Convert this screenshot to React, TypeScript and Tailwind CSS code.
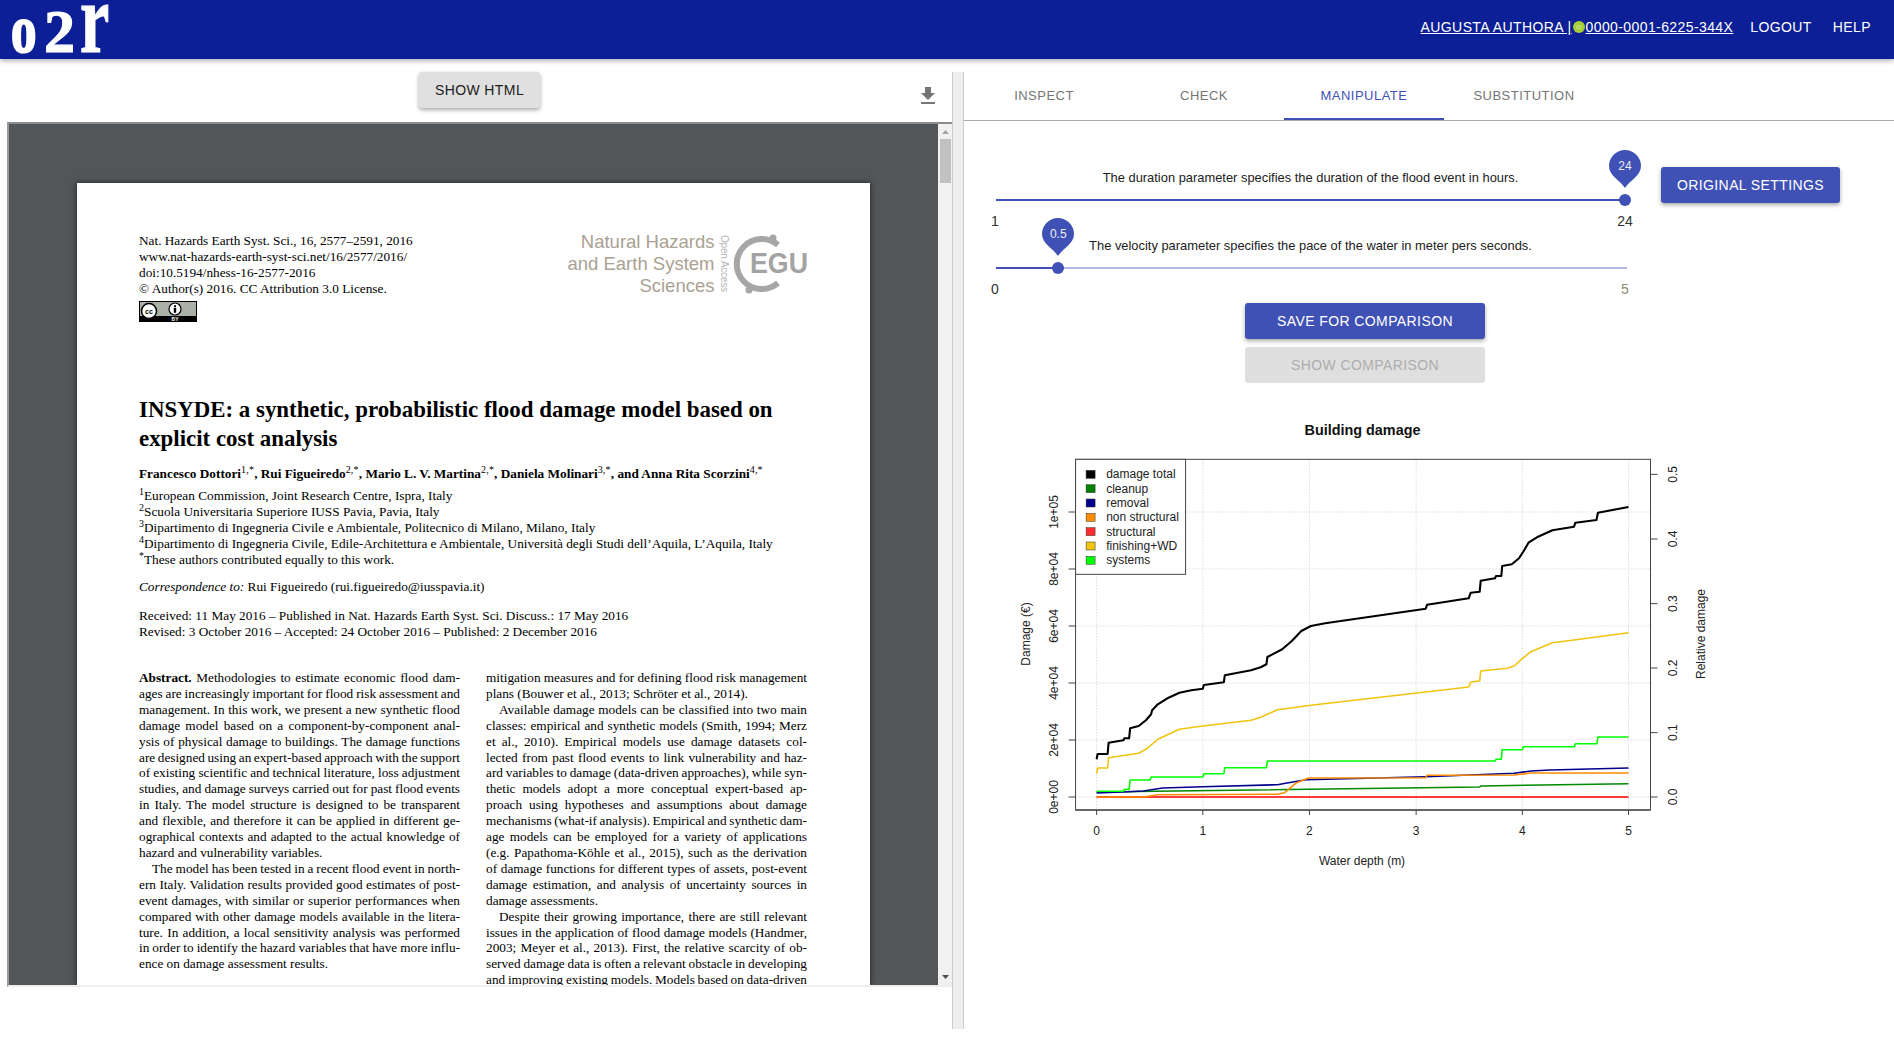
import React from "react";

const leftCol: (string | { t: string; last?: boolean; indent?: boolean; abs?: boolean })[] = [
  { t: " Methodologies to estimate economic flood dam-", abs: true },
  "ages are increasingly important for flood risk assessment and",
  "management. In this work, we present a new synthetic flood",
  "damage model based on a component-by-component anal-",
  "ysis of physical damage to buildings. The damage functions",
  "are designed using an expert-based approach with the support",
  "of existing scientific and technical literature, loss adjustment",
  "studies, and damage surveys carried out for past flood events",
  "in Italy. The model structure is designed to be transparent",
  "and flexible, and therefore it can be applied in different ge-",
  "ographical contexts and adapted to the actual knowledge of",
  { t: "hazard and vulnerability variables.", last: true },
  { t: "The model has been tested in a recent flood event in north-", indent: true },
  "ern Italy. Validation results provided good estimates of post-",
  "event damages, with similar or superior performances when",
  "compared with other damage models available in the litera-",
  "ture. In addition, a local sensitivity analysis was performed",
  "in order to identify the hazard variables that have more influ-",
  { t: "ence on damage assessment results.", last: true },
];

const rightCol: (string | { t: string; last?: boolean; indent?: boolean })[] = [
  "mitigation measures and for defining flood risk management",
  { t: "plans (Bouwer et al., 2013; Schröter et al., 2014).", last: true },
  { t: "Available damage models can be classified into two main", indent: true },
  "classes: empirical and synthetic models (Smith, 1994; Merz",
  "et al., 2010). Empirical models use damage datasets col-",
  "lected from past flood events to link vulnerability and haz-",
  "ard variables to damage (data-driven approaches), while syn-",
  "thetic models adopt a more conceptual expert-based ap-",
  "proach using hypotheses and assumptions about damage",
  "mechanisms (what-if analysis). Empirical and synthetic dam-",
  "age models can be employed for a variety of applications",
  "(e.g. Papathoma-Köhle et al., 2015), such as the derivation",
  "of damage functions for different types of assets, post-event",
  "damage estimation, and analysis of uncertainty sources in",
  { t: "damage assessments.", last: true },
  { t: "Despite their growing importance, there are still relevant", indent: true },
  "issues in the application of flood damage models (Handmer,",
  "2003; Meyer et al., 2013). First, the relative scarcity of ob-",
  "served damage data is often a relevant obstacle in developing",
  "and improving existing models. Models based on data-driven",
];

function Column({ lines }: { lines: typeof leftCol }) {
  return (
    <div className="w-[321px]">
      {lines.map((l, i) => {
        const o = typeof l === "string" ? { t: l } : l;
        const item = o as { t: string; last?: boolean; indent?: boolean; abs?: boolean };
        return (
          <div
            key={i}
            className={
              "h-[15.92px] whitespace-nowrap " +
              (item.last ? "" : "[text-align:justify] [text-align-last:justify] [word-spacing:-1.6px] ") +
              (item.indent ? "pl-[13px]" : "")
            }
          >
            {item.abs && <b>Abstract.</b>}
            {item.t}
          </div>
        );
      })}
    </div>
  );
}

function EguLogo() {
  return (
    <svg width="250" height="66" viewBox="0 0 250 66" className="-mt-[1px] -mr-[1px] shrink-0">
      <g fontFamily="'Liberation Sans',sans-serif" fontSize="18.5" fill="#aaa193" textAnchor="end">
        <text x="155.5" y="15.5">Natural Hazards</text>
        <text x="155.5" y="38">and Earth System</text>
        <text x="155.5" y="60">Sciences</text>
      </g>
      <text
        transform="translate(162,3) rotate(90)"
        fontFamily="'Liberation Sans',sans-serif"
        fontSize="10"
        fill="#b5b5b5"
        textLength="57"
      >
        Open Access
      </text>
      <path d="M219 13 A25 25 0 1 0 219 51" fill="none" stroke="#a6a6a6" strokeWidth="6" />
      <circle cx="214" cy="6" r="3.5" fill="#a6a6a6" />
      <circle cx="190" cy="58" r="3.5" fill="#a6a6a6" />
      <text
        x="191"
        y="41"
        fontFamily="'Liberation Sans',sans-serif"
        fontWeight="700"
        fontSize="29"
        fill="#a3a3a3"
        textLength="58"
        lengthAdjust="spacingAndGlyphs"
      >
        EGU
      </text>
    </svg>
  );
}

function CcBadge() {
  return (
    <svg width="58" height="21" viewBox="0 0 58 21" className="mt-1 block">
      <rect width="58" height="21" fill="#000" />
      <rect x="1" y="1" width="56" height="14" fill="#aab0a6" />
      <circle cx="10" cy="10" r="7.5" fill="#fff" stroke="#000" strokeWidth="1.5" />
      <text x="10" y="12.5" textAnchor="middle" fontSize="7" fontWeight="700" fontFamily="'Liberation Sans',sans-serif">cc</text>
      <circle cx="36" cy="8" r="6" fill="#fff" stroke="#000" strokeWidth="1.2" />
      <circle cx="36" cy="5.2" r="1.1" fill="#000" />
      <rect x="34.8" y="6.8" width="2.4" height="5" fill="#000" />
      <text x="36" y="20" textAnchor="middle" fontSize="5" fill="#fff" fontWeight="700" fontFamily="'Liberation Sans',sans-serif">BY</text>
    </svg>
  );
}

function Pdf() {
  return (
    <div className="mx-auto h-[802px] w-[793px] overflow-hidden bg-white px-[62px] pt-[50px] text-[13.28px] leading-[16px] text-black shadow-[0_0_6px_rgba(0,0,0,0.6)] [font-family:'Liberation_Serif',serif]">
      <div className="flex items-start justify-between">
        <div>
          <div>Nat. Hazards Earth Syst. Sci., 16, 2577–2591, 2016</div>
          <div>www.nat-hazards-earth-syst-sci.net/16/2577/2016/</div>
          <div>doi:10.5194/nhess-16-2577-2016</div>
          <div>© Author(s) 2016. CC Attribution 3.0 License.</div>
          <CcBadge />
        </div>
        <EguLogo />
      </div>
      <h1 className="mt-[73px] text-[22.9px] font-bold leading-[29px]">
        INSYDE: a synthetic, probabilistic flood damage model based on
        <br />
        explicit cost analysis
      </h1>
      <div className="mt-[13px] font-bold whitespace-nowrap">
        Francesco Dottori<sup className="text-[10px] font-normal tracking-[0.2px]">1,*</sup>, Rui Figueiredo
        <sup className="text-[10px] font-normal tracking-[0.2px]">2,*</sup>, Mario L. V. Martina
        <sup className="text-[10px] font-normal tracking-[0.2px]">2,*</sup>, Daniela Molinari
        <sup className="text-[10px] font-normal tracking-[0.2px]">3,*</sup>, and Anna Rita Scorzini
        <sup className="text-[10px] font-normal tracking-[0.2px]">4,*</sup>
      </div>
      <div className="mt-[6px] whitespace-nowrap">
        <div><sup className="text-[10px]">1</sup>European Commission, Joint Research Centre, Ispra, Italy</div>
        <div><sup className="text-[10px]">2</sup>Scuola Universitaria Superiore IUSS Pavia, Pavia, Italy</div>
        <div><sup className="text-[10px]">3</sup>Dipartimento di Ingegneria Civile e Ambientale, Politecnico di Milano, Milano, Italy</div>
        <div><sup className="text-[10px]">4</sup>Dipartimento di Ingegneria Civile, Edile-Architettura e Ambientale, Università degli Studi dell’Aquila, L’Aquila, Italy</div>
        <div><sup className="text-[10px]">*</sup>These authors contributed equally to this work.</div>
      </div>
      <div className="mt-[11px]">
        <i>Correspondence to:</i> Rui Figueiredo (rui.figueiredo@iusspavia.it)
      </div>
      <div className="mt-[13px]">
        <div>Received: 11 May 2016 – Published in Nat. Hazards Earth Syst. Sci. Discuss.: 17 May 2016</div>
        <div>Revised: 3 October 2016 – Accepted: 24 October 2016 – Published: 2 December 2016</div>
      </div>
      <div className="mt-[30px] flex gap-[26px]">
        <Column lines={leftCol} />
        <Column lines={rightCol} />
      </div>
    </div>
  );
}

function Slider({
  text,
  min,
  max,
  value,
  pct,
  maxColor,
  trackClass,
}: {
  text: string;
  min: string;
  max: string;
  value: string;
  pct: number;
  maxColor: string;
  trackClass: string;
}) {
  return (
    <div className="h-[68px] w-[629px]">
      <div className="h-[16px] whitespace-nowrap text-center text-[12.9px] leading-[16px] text-[#212121]">
        {text}
      </div>
      <div className="relative flex h-[28px] items-center">
        <div className={"relative h-[2px] shrink-0 bg-[#b2b9e1] " + trackClass}>
          <div className="h-full bg-[#3f51b5]" style={{ width: `${pct}%` }} />
        </div>
        <div
          className="absolute top-[8px] h-[12px] w-[12px] -translate-x-1/2 rounded-full bg-[#3f51b5]"
          style={{ left: `${pct}%` }}
        />
        <div
          className="absolute top-[-36px] flex h-[38px] w-[32px] -translate-x-1/2 items-start justify-center"
          style={{ left: `${pct}%` }}
        >
          <svg width="32" height="38" viewBox="0 0 32 38" className="absolute inset-0">
            <path d="M16 38 C11 30 0 26 0 16 A16 16 0 0 1 32 16 C32 26 21 30 16 38Z" fill="#3f51b5" />
          </svg>
          <span className="relative mt-[9px] text-[12px] leading-[14px] text-white/90">{value}</span>
        </div>
      </div>
      <div className="-mx-[10px] flex justify-between text-[14px] leading-[14px]">
        <span className="-ml-px w-[20px] text-center text-[#333]">{min}</span>
        <span className="w-[20px] text-center" style={{ color: maxColor }}>{max}</span>
      </div>
    </div>
  );
}

const X = (z: number) => z / 2.0907 - 10;
const Y = (z: number) => z / 3 - 5;

const series: { c: string; w: number; p: number[] }[] = [
  { c: "#ff3b3b", w: 1.8, p: [202, 1068, 1314, 1068] },
  {
    c: "#008a00",
    w: 1.5,
    p: [202, 1053, 1003, 1038, 1005, 1035, 1314, 1028],
  },
  {
    c: "#00008b",
    w: 1.6,
    p: [202, 1056, 270, 1052, 300, 1050, 340, 1041, 424, 1037, 580, 1031, 600, 1026, 640, 1016, 890, 1007, 1075, 997, 1110, 990, 1150, 987, 1314, 981],
  },
  {
    c: "#ff8c00",
    w: 1.6,
    p: [202, 1068, 300, 1068, 330, 1061, 580, 1060, 595, 1055, 620, 1025, 645, 1011, 890, 1010, 893, 1003, 1075, 1002, 1110, 996, 1314, 996],
  },
  {
    c: "#00ff00",
    w: 1.6,
    p: [202, 1051, 258, 1051, 260, 1045, 270, 1045, 272, 1017, 314, 1017, 316, 1008, 424, 1008, 426, 998, 468, 998, 470, 980, 557, 980, 559, 960, 1035, 960, 1037, 955, 1048, 955, 1050, 926, 1092, 926, 1094, 917, 1201, 917, 1203, 908, 1248, 908, 1250, 888, 1314, 888],
  },
  {
    c: "#f1c40f",
    w: 1.6,
    p: [202, 998, 204, 981, 225, 981, 227, 950, 290, 937, 305, 925, 330, 895, 375, 865, 424, 855, 525, 838, 545, 829, 580, 806, 650, 793, 980, 738, 984, 723, 1003, 720, 1005, 690, 1060, 682, 1075, 675, 1090, 655, 1110, 632, 1155, 605, 1200, 597, 1314, 575],
  },
  {
    c: "#000000",
    w: 2.1,
    p: [202, 955, 204, 939, 225, 939, 227, 905, 258, 898, 260, 892, 270, 892, 272, 862, 290, 855, 305, 838, 316, 820, 318, 808, 330, 790, 350, 772, 375, 755, 400, 748, 424, 743, 426, 732, 468, 724, 470, 703, 525, 688, 545, 679, 557, 670, 559, 648, 590, 625, 610, 600, 630, 570, 650, 555, 680, 547, 890, 503, 893, 491, 980, 472, 984, 455, 1003, 452, 1005, 419, 1035, 412, 1037, 405, 1048, 405, 1050, 375, 1070, 370, 1085, 352, 1095, 330, 1105, 305, 1125, 287, 1155, 268, 1200, 257, 1203, 245, 1247, 237, 1250, 215, 1314, 198],
  },
];

const xTicks = [202, 424, 647, 870, 1092, 1314];
const yTicks: [number, string][] = [
  [1068, "0e+00"],
  [897, "2e+04"],
  [726, "4e+04"],
  [555, "6e+04"],
  [384, "8e+04"],
  [213, "1e+05"],
];
const rTicks: [number, string][] = [
  [1068, "0.0"],
  [875, "0.1"],
  [681, "0.2"],
  [488, "0.3"],
  [294, "0.4"],
  [100, "0.5"],
];
const legend: [string, string][] = [
  ["#000000", "damage total"],
  ["#008000", "cleanup"],
  ["#00008b", "removal"],
  ["#ff8c00", "non structural"],
  ["#ff2d2d", "structural"],
  ["#f1c40f", "finishing+WD"],
  ["#00ff00", "systems"],
];

function Chart() {
  const left = X(158);
  const right = X(1360);
  const top = Y(55);
  const bottom = Y(1107);
  return (
    <svg width="710" height="430" viewBox="0 0 710 430" className="ml-[46px] mt-[6px] block" fontFamily="'Liberation Sans',sans-serif" fontSize="12" fill="#222">
      {xTicks.map((t) => (
        <line key={t} x1={X(t)} x2={X(t)} y1={top} y2={bottom} stroke="#ccc" strokeWidth="1" strokeDasharray="1 2" />
      ))}
      {yTicks.map(([t]) => (
        <line key={t} x1={left} x2={right} y1={Y(t)} y2={Y(t)} stroke="#ccc" strokeWidth="1" strokeDasharray="1 2" />
      ))}
      {series.map((s) => {
        const pts: string[] = [];
        for (let i = 0; i < s.p.length; i += 2) pts.push(`${X(s.p[i]).toFixed(1)},${Y(s.p[i + 1]).toFixed(1)}`);
        return <polyline key={s.c} points={pts.join(" ")} fill="none" stroke={s.c} strokeWidth={s.w} strokeLinejoin="round" />;
      })}
      <rect x={left} y={top} width={right - left} height={bottom - top} fill="none" stroke="#444" strokeWidth="1" />
      <line x1={left} x2={right} y1={bottom} y2={bottom} stroke="#666" strokeWidth="2" />
      {xTicks.map((t, i) => (
        <g key={t}>
          <line x1={X(t)} x2={X(t)} y1={bottom} y2={bottom + 5} stroke="#444" />
          <text x={X(t)} y={389} textAnchor="middle">{i}</text>
        </g>
      ))}
      {yTicks.map(([t, l]) => (
        <g key={l}>
          <line x1={left - 7} x2={left} y1={Y(t)} y2={Y(t)} stroke="#444" />
          <text transform={`translate(48,${Y(t)}) rotate(-90)`} textAnchor="middle">{l}</text>
        </g>
      ))}
      {rTicks.map(([t, l]) => (
        <g key={l}>
          <line x1={right} x2={right + 7} y1={Y(t)} y2={Y(t)} stroke="#444" />
          <text transform={`translate(667,${Y(t)}) rotate(-90)`} textAnchor="middle">{l}</text>
        </g>
      ))}
      <text transform={`translate(20,188) rotate(-90)`} textAnchor="middle">Damage (€)</text>
      <text transform={`translate(695,188) rotate(-90)`} textAnchor="middle">Relative damage</text>
      <text x="352" y="419" textAnchor="middle">Water depth (m)</text>
      <rect x={left} y={top} width="110" height="115" fill="#fff" stroke="#444" strokeWidth="1" />
      {legend.map(([c, l], i) => {
        const y = Y(100 + i * 43);
        return (
          <g key={l}>
            <rect x={X(180)} y={y - 4} width="9" height="8" fill={c} stroke="#333" strokeWidth="0.5" />
            <text x={X(222)} y={y + 4}>{l}</text>
          </g>
        );
      })}
    </svg>
  );
}

export default function App() {
  const tabs = ["INSPECT", "CHECK", "MANIPULATE", "SUBSTITUTION"];
  return (
    <div className="flex h-[1037px] w-[1894px] flex-col overflow-hidden bg-white text-[14px] [font-family:'Liberation_Sans',sans-serif]">
      <header className="relative z-10 flex h-[59px] shrink-0 items-start justify-between bg-[#0c1f96] shadow-[0_2px_5px_rgba(0,0,0,0.3)]">
        <svg width="120" height="59" viewBox="0 0 120 59" className="shrink-0">
          <g fontFamily="'Liberation Serif',serif" fontWeight="700" fill="#fff" stroke="#fff">
            <text transform="translate(11,52) scale(0.76,1)" fontSize="67" strokeWidth="2.2">o</text>
            <text transform="translate(44,52)" fontSize="62" strokeWidth="1.2">2</text>
            <text transform="translate(80,52) scale(0.66,1)" fontSize="100" strokeWidth="1.2">r</text>
          </g>
        </svg>
        <div className="flex h-[54px] items-center pr-[23px] tracking-[0.4px] text-white">
          <a className="flex items-center underline">
            <span className="whitespace-pre">AUGUSTA AUTHORA |</span>
            <svg width="14" height="14" viewBox="0 0 14 14" className="shrink-0">
              <circle cx="7" cy="7" r="6" fill="#a6ce39" />
              <text x="7" y="9" textAnchor="middle" fontSize="5" fill="#dfeeb0" fontFamily="'Liberation Sans',sans-serif">iD</text>
            </svg>
            <span>0000-0001-6225-344X</span>
          </a>
          <span className="ml-[17px]">LOGOUT</span>
          <span className="ml-[21px]">HELP</span>
        </div>
      </header>
      <main className="flex min-h-0 flex-1 items-start pt-[13px]">
        <section className="w-[952px] shrink-0">
          <div className="relative flex h-[50px] items-start justify-center">
            <button className="ml-[7px] h-[36px] w-[121px] rounded-[3px] bg-[#e0e0e0] text-[14px] tracking-[0.4px] text-[#212121] shadow-[0_2px_4px_rgba(0,0,0,0.35)]">
              SHOW HTML
            </button>
            <svg width="24" height="24" viewBox="0 0 24 24" className="absolute right-[12px] top-[12px]" fill="#757575">
              <path d="M19 9h-4V3H9v6H5l7 7 7-7zM5 18v2h14v-2H5z" />
            </svg>
          </div>
          <div className="ml-[7px] flex h-[865px] border-t-2 border-b-2 border-l-2 border-t-[#8c8c8c] border-b-[#eeeeee] border-l-[#9a9a9a]">
            <div className="min-w-0 flex-1 overflow-hidden bg-[#525659] pt-[59px]">
              <Pdf />
            </div>
            <div className="flex w-[14px] shrink-0 flex-col items-center bg-[#f1f1f1] pt-[6px]">
              <svg width="7" height="4" viewBox="0 0 7 4" className="shrink-0"><path d="M3.5 0L7 4H0z" fill="#a3a3a3" /></svg>
              <div className="mt-[5px] h-[44px] w-[11px] bg-[#c1c1c1]" />
              <div className="flex-1" />
              <svg width="7" height="4" viewBox="0 0 7 4" className="mb-[6px] shrink-0"><path d="M0 0h7L3.5 4z" fill="#505050" /></svg>
            </div>
          </div>
        </section>
        <div className="h-[957px] w-[12px] shrink-0 border-x border-x-[#cccccc] bg-[#eeeeee]" />
        <section className="min-w-0 flex-1">
          <nav className="flex h-[49px] border-b border-b-[#aaaaaa]">
            {tabs.map((t, i) => (
              <div
                key={t}
                className={
                  "flex h-[48px] w-[160px] items-center justify-center text-[13px] tracking-[0.48px] " +
                  (i === 2 ? "border-b-2 border-t-2 border-t-transparent border-b-[#3f51b5] text-[#3f51b5]" : "text-[#757575]")
                }
              >
                {t}
              </div>
            ))}
          </nav>
          <div className="mt-[49px] flex items-start pl-[32px]">
            <div>
              <Slider
                text="The duration parameter specifies the duration of the flood event in hours."
                min="1"
                max="24"
                value="24"
                pct={100}
                maxColor="#333"
                trackClass="w-[629px]"
              />
              <Slider
                text="The velocity parameter specifies the pace of the water in meter pers seconds."
                min="0"
                max="5"
                value="0.5"
                pct={9.9}
                maxColor="#8a8a70"
                trackClass="w-[631px]"
              />
            </div>
            <button className="ml-[36px] -mt-[3px] h-[36px] w-[179px] rounded-[3px] bg-[#3f51b5] text-[14px] tracking-[0.4px] text-white shadow-[0_2px_4px_rgba(0,0,0,0.35)]">
              ORIGINAL SETTINGS
            </button>
          </div>
          <div className="flex w-[802px] flex-col items-center">
            <button className="mt-[-3px] h-[36px] w-[240px] rounded-[3px] bg-[#3f51b5] text-[14px] tracking-[0.4px] text-white shadow-[0_2px_4px_rgba(0,0,0,0.35)]">
              SAVE FOR COMPARISON
            </button>
            <button className="mt-[8px] h-[36px] w-[240px] rounded-[3px] bg-[#dfdfdf] text-[14px] tracking-[0.4px] text-[#adadad]">
              SHOW COMPARISON
            </button>
            <h2 className="mt-[37px] -ml-[5px] h-[20px] text-[14.4px] leading-[20px] font-bold text-[#111]">
              Building damage
            </h2>
          </div>
          <Chart />
        </section>
      </main>
    </div>
  );
}
